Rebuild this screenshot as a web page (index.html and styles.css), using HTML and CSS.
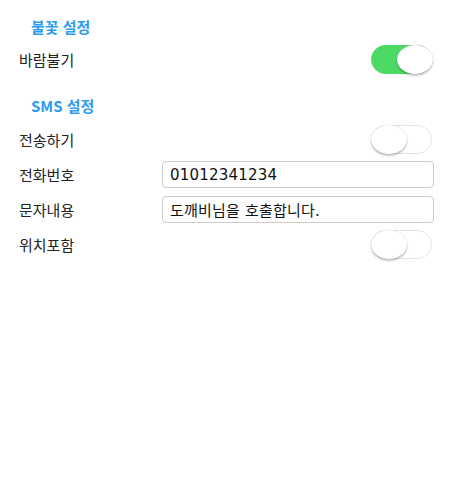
FILE: index.html
```html
<!DOCTYPE html>
<html lang="ko">
<head>
  <meta charset="UTF-8" />
  <meta name="viewport" content="width=device-width, initial-scale=1.0"/>
  <title>설정</title>
  <link rel="stylesheet" href="styles.css">
</head>
<body>

  <main>
    <h2 class="group-title first">불꽃 설정</h2>
    <div class="row">
      <span class="label">바람불기</span>
      <span class="toggle on"><span class="knob"></span></span>
    </div>

    <h2 class="group-title">SMS 설정</h2>
    <div class="row">
      <span class="label">전송하기</span>
      <span class="toggle"><span class="knob"></span></span>
    </div>
    <div class="row">
      <span class="label">전화번호</span>
      <input type="text" class="field" value="01012341234" />
    </div>
    <div class="row">
      <span class="label">문자내용</span>
      <input type="text" class="field" value="도깨비님을 호출합니다." />
    </div>
    <div class="row">
      <span class="label">위치포함</span>
      <span class="toggle"><span class="knob"></span></span>
    </div>
  </main>

</body>
</html>
```

FILE: styles.css
```css
* {
  box-sizing: border-box;
}

body {
  font-family: "Noto Sans CJK KR", "Noto Sans", sans-serif;
  background: #fff;
  color: #222;
  margin: 0;
  padding: 0;
}

main {
  padding: 0 19px 0 19px;
}

.group-title {
  margin: 0;
  padding: 16px 0 3px 12px;
  font-size: 15px;
  line-height: 26px;
  font-weight: bold;
  color: #2d9cf0;
}

.group-title.first {
  padding-top: 14px;
  padding-bottom: 2px;
}

.row {
  display: flex;
  align-items: center;
  justify-content: space-between;
  height: 35px;
}

.label {
  font-size: 15px;
  width: 143px;
  flex-shrink: 0;
}

.toggle {
  position: relative;
  width: 61px;
  height: 29px;
  margin-right: 2px;
  border-radius: 15px;
  border: 1.5px solid #e4e4e4;
  background: #fff;
}

.toggle .knob {
  position: absolute;
  top: -1.5px;
  left: -1.5px;
  width: 36px;
  height: 29px;
  border-radius: 50%;
  background: #fff;
  box-shadow: 0 2px 2px rgba(0,0,0,0.22), 0 0 1px rgba(0,0,0,0.25);
}

.toggle.on {
  background: #4cd964;
  border-color: #4cd964;
}

.toggle.on .knob {
  left: auto;
  right: -1.5px;
}

.field {
  flex: 1;
  height: 27px;
  padding: 0 7px;
  font-family: "DejaVu Sans", "Noto Sans CJK KR", sans-serif;
  font-size: 15px;
  letter-spacing: 0.2px;
  color: #111;
  border: 1px solid #ccc;
  border-radius: 4px;
  outline: none;
}
```
